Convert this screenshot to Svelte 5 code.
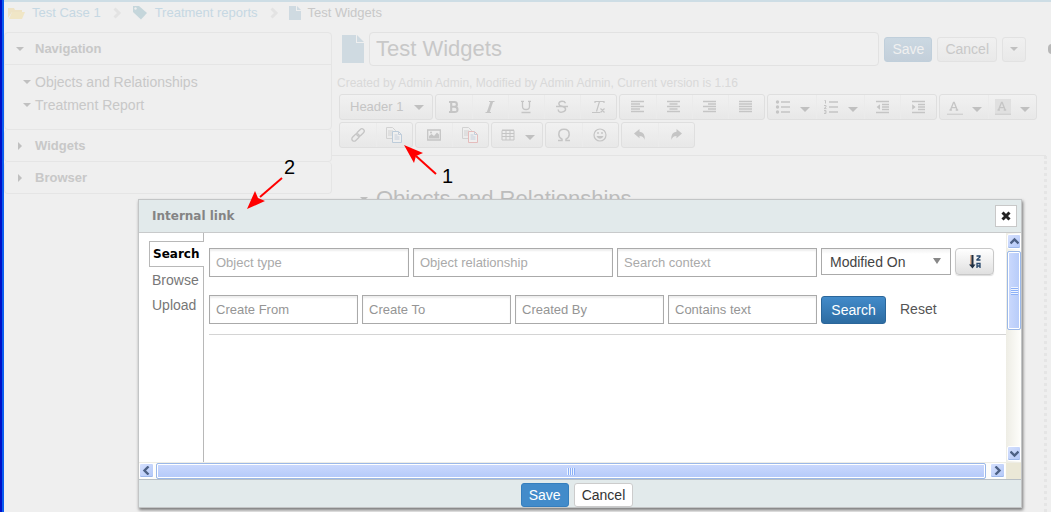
<script>
  const rowOne = [
    [['bold', 'Bold'], ['italic', 'Italic'], ['underline', 'Underline'], ['strike', 'Strikethrough'], ['clear', 'Clear formatting']],
    [['left', 'Align left'], ['center', 'Align center'], ['right', 'Align right'], ['justify', 'Justify']],
    [['bullets', 'Bulleted list', true], ['numbers', 'Numbered list', true], ['outdent', 'Outdent'], ['indent', 'Indent']],
    [['color', 'Text color', true], ['highlight', 'Highlight', true]]
  ];
  const rowTwo = [
    [['link', 'Link'], ['pages', 'Internal link']],
    [['image', 'Image'], ['redpages', 'Internal image']],
    [['table', 'Table', true]],
    [['omega', 'Special character'], ['smile', 'Emoticon']],
    [['undo', 'Undo'], ['redo', 'Redo']]
  ];
  const lines = {
    left: ['M1 1.5h13M1 6.5h13M1 11.5h13', 'M1 4h9M1 9h9'],
    center: ['M1 1.5h13M1 6.5h13M1 11.5h13', 'M3.5 4h8M3.5 9h8'],
    right: ['M1 1.5h13M1 6.5h13M1 11.5h13', 'M6 4h8M6 9h8'],
    justify: ['M1 1.5h13M1 6.5h13M1 11.5h13', 'M1 4h13M1 9h13']
  };
</script>

{#snippet icon(name)}
  <svg class="icon" width="16" height="16" viewBox="0 0 16 16" fill="none" stroke="currentColor" aria-hidden="true">
    {#if name === 'bold'}
      <path d="M5.2 3v10M3 3h5.300q2.600 0 2.600 2.400T8.300 7.800H5M8.300 7.800q3.200 0 3.200 2.700T8.300 13H3" stroke-width="2.100" />
    {:else if name === 'italic'}
      <path d="M7 2.500h5.500M3.500 13.500H9" stroke-width="1.200" /><path d="M9.900 2.500l-3.800 11" stroke-width="2.600" />
    {:else if name === 'underline'}
      <path d="M4.500 2v5.500q0 3 3.500 3t3.500-3V2M3 2.300h3M10 2.300h3M3.500 13.500h9" stroke-width="1.300" />
    {:else if name === 'strike'}
      <path d="M11.500 4.200Q10.800 2.300 8 2.300T4.800 4.700Q5 6.600 8 7.300q3.600.8 3.600 3T8 13.100t-3.800-2.600M2 7.500h12" stroke-width="1.400" />
    {:else if name === 'clear'}
      <path d="M5 2.500h9M9.500 2.500l-3 10M2 13.500h8M10.500 9.500l4 4M14.500 9.500l-4 4M5 2v2M14 2v2" stroke-width="1.200" />
    {:else if lines[name]}
      <g transform="translate(0 1)"><path d={lines[name][0]} stroke-width="1.400" /><path d={lines[name][1]} stroke-width="1.300" /></g>
    {:else if name === 'bullets'}
      <path d="M6 3h9M6 8h9M6 13h9" stroke-width="1.300" />
      <g fill="currentColor" stroke="none"><circle cx="2.500" cy="3" r="1.700" /><circle cx="2.500" cy="8" r="1.700" /><circle cx="2.500" cy="13" r="1.700" /></g>
    {:else if name === 'numbers'}
      <path d="M6 3h9M6 8h9M6 13h9" stroke-width="1.300" />
      <path d="M1.500 1.500h1v3M1 6.500h2v1.500L1 9.600h2.500M1 11.500h2v3H1M1.500 13H3" stroke-width="1" />
    {:else if name === 'outdent' || name === 'indent'}
      <path d="M2 2.500h13M8 5.500h7M8 8h7M8 10.500h7M2 13.500h13" stroke-width="1.300" />
      <path d={name === 'outdent' ? 'M6 5.2v5.6L2.6 8z' : 'M2.2 5.2v5.6L5.6 8z'} fill="currentColor" stroke="none" />
    {:else if name === 'color' || name === 'highlight'}
      {#if name === 'highlight'}<path d="M0 0h16v16H0z" fill="#e0e0e0" stroke="none" />{/if}
      <path d="M3.500 11L6.500 3.500h.7l3 7.500M4.500 8.600h4.700M2.500 11h2.400M8.700 11h2.500" stroke-width="1.300" />
      <path d="M0 15.300h16" stroke="#d2d2d2" stroke-width="1.400" />
    {:else if name === 'link'}
      <g transform="rotate(-45 8 8)" stroke-width="1.300"><rect x=".2" y="5.700" width="8.600" height="4.600" rx="2.300" /><rect x="7.200" y="5.700" width="8.600" height="4.600" rx="2.300" /></g>
    {:else if name === 'pages' || name === 'redpages'}
      <path d="M.5.5h6l3 3v8h-9zM2 4h5M2 6h6M2 8h6" stroke="#d2d2d2" />
      <path d="M6.500 4.500h6l3 3v8h-9z" fill="#efefef" stroke={name === 'pages' ? '#bdccda' : '#e5bcbc'} />
      <path d="M12.500 4.500v3h3M8.500 8h3M8.500 10h5M8.500 12h5" stroke="#c5cedb" />
    {:else if name === 'image'}
      <path d="M1.700 3h12.600v10H1.700z" stroke-width="1.300" /><path d="M3 11.500V9l2.500-2 2.500 2 3-3.500 2 2v4z" fill="currentColor" stroke="none" /><circle cx="5" cy="5.500" r="1" fill="currentColor" stroke="none" />
    {:else if name === 'table'}
      <path d="M2 3.500h12v9.500H2zM6 3.500V13M10 3.500V13M2 6.500h12M2 9.500h12M2 3h12" />
    {:else if name === 'omega'}
      <path d="M2 13.500h4v-1.300Q2.800 10.300 2.800 7.400 2.800 2.300 8 2.300t5.200 5.100q0 2.900-3.200 4.800v1.300h4" stroke-width="1.500" />
    {:else if name === 'smile'}
      <circle cx="8" cy="8" r="6" stroke-width="1.200" /><path d="M4.500 9q1 2.800 3.500 2.800T11.500 9z" fill="currentColor" stroke="none" /><path d="M6 5v2M10 5v2" stroke-width="1.400" />
    {:else}
      <path transform={name === 'redo' ? 'translate(16 0) scale(-1 1)' : ''} d="M2 6.500L7.500 2v2.800Q13.500 5.200 12.500 13q-.8-4-5-4v2.300z" fill="currentColor" stroke="none" />
    {/if}
  </svg>
{/snippet}

{#snippet group(items)}
  <div class="group" class:single={items.length === 1}>
    {#each items as [name, label, menu]}
      <button class="tool" class:menu aria-label={label}>{@render icon(name)}{#if menu}<i class="caret wide"></i>{/if}</button>
    {/each}
  </div>
{/snippet}

{#snippet chevron()}
  <svg width="9" height="12" viewBox="0 0 9 12" aria-hidden="true"><path d="M1.500 1.500L6 6l-4.500 4.500" fill="none" stroke="#e3e3e3" stroke-width="3" /></svg>
{/snippet}

{#snippet arrowHead(d)}
  <svg width="9" height="9" viewBox="0 0 9 9" aria-hidden="true"><path {d} fill="none" stroke="#4d6185" stroke-width="2.400" /></svg>
{/snippet}

<div class="page">
  <nav class="crumbs" aria-label="Breadcrumb">
    <svg width="17" height="13" viewBox="0 0 17 13" aria-hidden="true"><path d="M0 1h6l1 2h7v2H4L0 11z" fill="#eee3c5" /><path d="M4 5h13l-3 7H1z" fill="#f0e6c6" /></svg>
    <a href="#case">Test Case 1</a>
    {@render chevron()}
    <svg width="16" height="14" viewBox="0 0 16 14" aria-hidden="true"><path d="M1 0h6l8 7-6 6.500L1 6z" fill="#c5d6db" /><circle cx="3.500" cy="2.500" r="1.200" fill="#efefef" /></svg>
    <a href="#reports">Treatment reports</a>
    {@render chevron()}
    <svg width="12" height="14" viewBox="0 0 12 14" aria-hidden="true"><path d="M0 0h7v5h5v9H0zM8 0l4 4H8z" fill="#cfdae1" /></svg>
    <span>Test Widgets</span>
  </nav>

  <div class="columns">
    <aside>
      <section>
        <h2><i class="caret"></i>Navigation</h2>
        <ul>
          <li><i class="caret"></i>Objects and Relationships</li>
          <li><i class="caret"></i>Treatment Report</li>
        </ul>
      </section>
      <section><h2><i class="caret side"></i>Widgets</h2></section>
      <section><h2><i class="caret side"></i>Browser</h2></section>
    </aside>

    <main>
      <div class="titlebar">
        <svg width="22" height="28" viewBox="0 0 22 28" aria-hidden="true"><path d="M0 0h14v8h8v20H0zM15 0l7 7h-7z" fill="#cfdae1" /></svg>
        <input class="title" aria-label="Title" value="Test Widgets" />
        <button class="pale primary">Save</button>
        <button class="pale">Cancel</button>
        <button class="pale more" aria-label="More actions"><i class="caret"></i></button>
        <i class="dot"></i>
      </div>
      <p class="meta">Created by Admin Admin, Modified by Admin Admin, Current version is 1.16</p>
      <div class="toolbar">
        <div class="toolrow">
          <div class="group"><button class="style">Header 1<i class="caret wide"></i></button></div>
          {#each rowOne as items}{@render group(items)}{/each}
        </div>
        <div class="toolrow">
          {#each rowTwo as items}{@render group(items)}{/each}
        </div>
      </div>
      <article>
        <h1><i class="caret"></i>Objects and Relationships</h1>
      </article>
    </main>
  </div>

  <div class="dialog" role="dialog" aria-labelledby="dialog-title">
    <header>
      <h3 id="dialog-title">Internal link</h3>
      <button class="close" aria-label="Close"><svg width="10" height="10" viewBox="0 0 10 10"><path d="M1.500 1.500l7 7M8.500 1.500l-7 7" stroke="#222" stroke-width="3" /></svg></button>
    </header>
    <div class="body">
      <div class="tabs">
        <button class="active">Search</button>
        <button>Browse</button>
        <button>Upload</button>
      </div>
      <form>
        <div class="row">
          <div class="fields">
            <input aria-label="Object type" placeholder="Object type" />
            <input aria-label="Object relationship" placeholder="Object relationship" />
            <input aria-label="Search context" placeholder="Search context" />
          </div>
          <div class="actions">
            <select aria-label="Sort by"><option>Modified On</option></select>
            <button type="button" class="sort" aria-label="Sort descending">
              <svg width="12" height="14" viewBox="0 0 12 14" fill="none"><path d="M2 0v10" stroke="#c9783c" stroke-width="1" /><path d="M3.500 0v12" stroke="#1f2f42" stroke-width="2" /><path d="M0 9.500h6.500L3.500 13.500z" fill="#1f2f42" /><path d="M7.500 1h3.500v1L8 4.500v.5h3.500" stroke="#26466a" stroke-width="1.300" /><path d="M8 13V8.500h3V13M8 11h3" stroke="#26466a" stroke-width="1.300" /></svg>
            </button>
          </div>
        </div>
        <div class="row">
          <div class="fields dark">
            <input aria-label="Create From" placeholder="Create From" />
            <input aria-label="Create To" placeholder="Create To" />
            <input aria-label="Created By" placeholder="Created By" />
            <input aria-label="Contains text" placeholder="Contains text" />
          </div>
          <div class="actions">
            <button type="button" class="search">Search</button>
            <button type="button" class="reset">Reset</button>
          </div>
        </div>
      </form>
      <div class="vbar">
        <div class="arrow">{@render arrowHead('M.5 6.500l4-4 4 4')}</div>
        <div class="thumb"><i></i></div>
        <span></span>
        <div class="arrow">{@render arrowHead('M.5 2.500l4 4 4-4')}</div>
      </div>
    </div>
    <div class="hbar">
      <div class="arrow">{@render arrowHead('M6.500 .5l-4 4 4 4')}</div>
      <div class="thumb"><i></i></div>
      <div class="arrow">{@render arrowHead('M2.500 .5l4 4-4 4')}</div>
      <div class="corner"></div>
    </div>
    <footer>
      <button class="save">Save</button>
      <button class="cancel">Cancel</button>
    </footer>
  </div>

  <div class="callout one">
    <svg width="33" height="30" viewBox="0 0 33 30" aria-hidden="true"><path d="M32 29L12 11" stroke="red" stroke-width="2" /><path d="M0 0l19 8-7 3-2 7z" fill="red" /></svg>
    <span>1</span>
  </div>
  <div class="callout two">
    <span>2</span>
    <svg width="36" height="33" viewBox="0 0 36 33" aria-hidden="true"><path d="M35 1L13 20" stroke="red" stroke-width="2" /><path d="M0 32l8-18 3 7 7 3z" fill="red" /></svg>
  </div>
</div>

<style>
  :global(body) { margin: 0; overflow: hidden; background: #efefef; }
  * { box-sizing: border-box; }
  button, input, select { font: inherit; color: inherit; margin: 0; }
  button { padding: 0; background: none; border: 0; }
  h1, h2, h3, p, ul { margin: 0; padding: 0; }
  ul { list-style: none; }
  a { color: #c6d8e3; text-decoration: none; }

  .page {
    position: relative;
    height: 100vh;
    overflow: hidden;
    display: flex;
    flex-direction: column;
    padding-left: 4px;
    background:
      linear-gradient(#0010c8, #0010c8) 0 0 / 2px 100% no-repeat,
      linear-gradient(#0a5cf0, #0a5cf0) 0 0 / 4px 100% no-repeat,
      linear-gradient(#cddde5, #cddde5) 0 0 / 100% 2px no-repeat;
    font: 14px/20px "Liberation Sans", Arial, sans-serif;
    color: #c8c8c8;
  }

  .caret { display: inline-block; border: 4px solid transparent; border-top-color: #c0c0c0; border-bottom: 0; flex: none; }
  .caret.wide { border-width: 5px 5px 0; }
  .caret.side { border: 4px solid transparent; border-left-color: #c0c0c0; border-right: 0; margin: 0 2px; }

  .crumbs { display: flex; align-items: center; height: 32px; padding: 2px 4px 8px; font-size: 13px; }
  .crumbs svg { flex: none; }
  .crumbs a, .crumbs span { margin: 0 12px 0 7px; }
  .crumbs > svg:nth-child(3), .crumbs > svg:nth-child(6) { margin-right: 10px; }

  .columns { flex: 1; display: flex; min-height: 0; }
  aside { flex: 0 0 328px; }
  section { border: 1px solid #e5e5e5; border-radius: 4px; }
  section + section { border-top-width: 0; }
  h2 { display: flex; align-items: center; gap: 11px; height: 31px; padding-left: 11px; font-size: 13px; }
  section ul { border-top: 1px solid #e5e5e5; padding: 5px 18px 13px; }
  li { display: flex; align-items: center; gap: 4px; height: 23px; }

  main { flex: 1; min-width: 0; display: flex; flex-direction: column; }
  .titlebar { display: flex; align-items: center; gap: 5px; padding-left: 10px; height: 34px; }
  .title { flex: 1; min-width: 0; height: 34px; padding: 0 6px; border: 1px solid #e2e2e2; border-radius: 4px; background: #f0f0f0; font-size: 22px; }
  .pale { height: 25px; padding: 0 7px; border: 1px solid #e2e2e2; border-radius: 3px; background: linear-gradient(#f0f0f0, #e9e9e9); }
  .pale.primary { border-color: #c0cfdb; background: linear-gradient(#cbd8e2, #c3cfda); color: #f0f0f0; }
  .pale.more { width: 24px; display: grid; place-items: center; }
  .dot { width: 8px; height: 10px; margin: 0 -5px 0 17px; border-radius: 5px; background: #b8b8b8; }
  .meta { margin: 7px 5px 1px; font-size: 12px; color: #d9d9d9; }

  .toolbar { display: flex; flex-direction: column; gap: 2px; padding: 0 0 7px 7px; border-bottom: 1px solid #e4e4e4; margin-right: 5px; }
  .toolrow { display: flex; gap: 2px; }
  .group { display: flex; flex: none; height: 26px; border: 1px solid #dfdfdf; border-radius: 3px; background: linear-gradient(#f1f1f1, #e8e8e8); color: #c5c5c5; }
  .single { padding: 0 1px; }
  .tool { width: 36px; display: flex; align-items: center; justify-content: center; }
  .tool + .tool { box-shadow: inset 1px 0 #ebebeb; }
  .tool.menu { width: 48px; gap: 9px; }
  .tool .caret { margin-top: 4px; }
  .style { width: 92px; display: flex; align-items: center; justify-content: space-between; padding: 0 8px 0 10px; font-size: 13px; }

  article { flex: 1; margin-right: 4px; padding: 31px 28px; border-right: 3px dotted #e5e5e5; }
  h1 { display: flex; align-items: center; gap: 8px; font-size: 22px; line-height: 24px; font-weight: 400; color: #bdbdbd; }

  .dialog {
    position: absolute;
    inset: 199px 29px 4px 138px;
    display: flex;
    flex-direction: column;
    border: 1px solid #c3c5c6;
    background: #fff;
    box-shadow: 1px 2px 3px #777;
    color: #777;
  }
  header { display: flex; justify-content: space-between; align-items: center; height: 33px; padding: 0 4px 0 13px; background: #e2eaeb; border-bottom: 1px solid #c8cacb; }
  h3 { font: bold 12px/20px "DejaVu Sans", sans-serif; color: #848484; }
  .close { width: 22px; height: 22px; display: grid; place-items: center; border: 1px solid #c8c8c8; background: #fff; }

  .body { flex: 1; min-height: 0; display: flex; }
  .tabs { flex: 0 0 65px; display: flex; flex-direction: column; padding: 8px 0 0 10px; background: linear-gradient(#b8b8b8, #b8b8b8) right / 1px 100% no-repeat; }
  .tabs button { height: 25px; padding-left: 3px; text-align: left; }
  .tabs .active { height: 26px; border: 1px solid #b8b8b8; border-right: 0; background: #fff; font: bold 12px/20px "DejaVu Sans", sans-serif; color: #000; }
  form { flex: 1; min-width: 0; padding: 15px 0 0 5px; }
  .row { display: flex; gap: 4px; height: 47px; align-items: flex-start; }
  .row + .row { height: 40px; border-bottom: 1px solid #d4d4d4; }
  .fields { flex: 1; min-width: 0; display: flex; gap: 4px; }
  .fields input { flex: 1; min-width: 0; width: 0; height: 29px; padding: 0 6px; border: 1px solid #aaa; border-radius: 0; background: #fff; box-shadow: inset 0 2px 2px #eee; font-size: 13px; color: #555; }
  .fields input::placeholder { color: #aaa; opacity: 1; }
  .fields.dark input::placeholder { color: #959595; }
  .actions { flex: 0 0 185px; display: flex; gap: 4px; }
  select {
    appearance: none;
    width: 130px;
    height: 27px;
    padding: 0 8px;
    border: 1px solid #aaa;
    border-radius: 0;
    color: #444;
    background: url("data:image/svg+xml,%3Csvg xmlns='http://www.w3.org/2000/svg' width='8' height='6'%3E%3Cpath d='M0 0h8L4 6z' fill='%23888'/%3E%3C/svg%3E") right 9px top 9px no-repeat, linear-gradient(#f1f1f1, #fff 5px);
  }
  .sort { width: 39px; height: 27px; display: grid; place-items: center; border: 1px solid #c8c8c8; border-radius: 4px; background: linear-gradient(#fff, #e0e0e0); box-shadow: 0 1px 1px #ddd; }
  .search { width: 65px; height: 28px; margin-top: 1px; border: 1px solid #2b669a; border-radius: 3px; background: linear-gradient(#428bca, #2d6ca2); color: #fff; }
  .reset { margin-left: 10px; height: 28px; color: #555; }

  .vbar { flex: 0 0 15px; display: flex; flex-direction: column; gap: 2px; padding: 1px 0 1px 1px; background: linear-gradient(90deg, #eeede5, #fefefb); }
  .vbar span { flex: 1; }
  .arrow { flex: none; width: 15px; height: 15px; display: grid; place-items: center; border: 1px solid #fff; border-radius: 2px; background: linear-gradient(135deg, #d5e0fd, #b3c8f8); box-shadow: inset 0 -1px #9db8ea; }
  .vbar .arrow { width: 14px; }
  .vbar .thumb { height: 79px; background: linear-gradient(90deg, #cbd9fd, #b6cbf9); }
  .thumb { display: grid; place-items: center; border: 1px solid #9bb8e8; border-radius: 2px; box-shadow: inset 0 0 0 1px #fff; }
  .vbar .thumb i { width: 7px; height: 8px; background: repeating-linear-gradient(#eef4fe 0 1px, #8cb0f8 1px 2px); }
  .hbar { flex: none; display: flex; gap: 2px; height: 17px; border-top: 1px solid #eeede5; background: #fdfdfa; }
  .hbar .thumb { flex: 1; background: linear-gradient(#cbd9fd, #b4c9f9); }
  .hbar .thumb + .arrow { margin-left: 2px; }
  .hbar .thumb i { width: 8px; height: 7px; background: repeating-linear-gradient(90deg, #eef4fe 0 1px, #8cb0f8 1px 2px); }
  .corner { width: 15px; margin-left: -1px; background: #ebe8d7; }
  footer { flex: none; display: flex; justify-content: center; gap: 5px; height: 28px; padding: 3px 6px 0 0; border-top: 1px solid #b8bfc5; background: #e2eaeb; }
  footer button { height: 24px; padding: 0 7px; border-radius: 3px; }
  .save { border: 1px solid #357ebd; background: #428bca; color: #fff; }
  .cancel { border: 1px solid #ccc; background: #fff; color: #333; }

  .callout { position: absolute; color: #000; font-size: 20px; pointer-events: none; }
  .callout svg { display: block; }
  .callout.one { left: 404px; top: 145px; display: flex; align-items: flex-end; gap: 5px; }
  .callout.one span { margin-bottom: -11px; }
  .callout.two { left: 247px; top: 157px; }
  .callout.two span { display: block; padding-left: 37px; }
</style>
